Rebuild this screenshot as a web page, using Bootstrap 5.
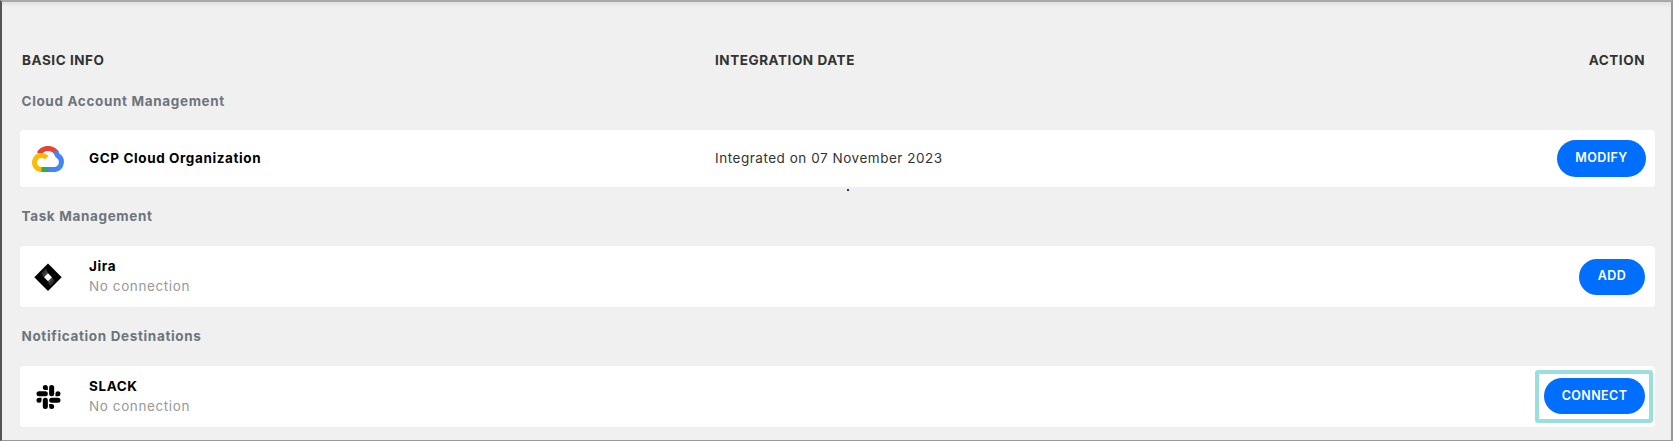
<!DOCTYPE html>
<html lang="en">
<head>
  <meta charset="UTF-8" />
  <title>Integrations</title>
  <link href="https://cdn.jsdelivr.net/npm/bootstrap@5.3.0/dist/css/bootstrap.min.css" rel="stylesheet" />
  <style>
    body {
      background-color: #fff;
      font-family: "Inter", "Liberation Sans", sans-serif;
      overflow: hidden;
    }

    .frame {
      width: 1673px;
      height: 441px;
      background-color: #f0f0f0;
      border-top: 2px solid #a9a9a9;
      border-left: 2px solid #555;
      border-right: 2px solid #999;
      border-bottom: 1px solid #999;
      box-shadow: inset 0 5px 5px -3px rgba(0, 0, 0, 0.08);
      padding: 48px 16px 0 18px;
      position: relative;
    }

    .head-row {
      height: 20px;
      margin-bottom: 21px;
      padding: 0 10px 0 2px;
      font-size: 13.5px;
      font-weight: 700;
      color: #333;
      letter-spacing: 0.55px;
      line-height: 20px;
    }

    .col-info { width: 693px; flex-shrink: 0; }

    .group-title {
      height: 20px;
      line-height: 20px;
      margin: 0 0 20px 1.5px;
      font-size: 13.5px;
      font-weight: 700;
      color: #6c757d;
      letter-spacing: 0.65px;
    }

    .item-row {
      height: 61px;
      margin-bottom: 19px;
      background-color: #fff;
      border-radius: 4px;
      padding-right: 10px;
    }

    .item-row.short { height: 57px; }

    .logo-cell {
      width: 69px;
      flex-shrink: 0;
      padding-left: 12px;
    }

    .logo-box { width: 33px; height: 26px; }
    .logo-box.tall { height: 28px; }

    .name-cell { width: 626px; flex-shrink: 0; }

    .item-name {
      font-size: 13.5px;
      font-weight: 700;
      color: #000;
      line-height: 18px;
      letter-spacing: 0.6px;
      margin-top: -1px;
      margin-bottom: 1px;
    }

    .item-sub {
      font-size: 13.5px;
      color: #999;
      line-height: 20px;
      letter-spacing: 0.6px;
    }

    .item-date {
      font-size: 13.5px;
      color: #333;
      letter-spacing: 0.53px;
    }

    .btn-pill {
      background-color: #006eff;
      border: 0;
      color: #fff;
      border-radius: 19px;
      height: 36px;
      padding: 0;
      font-size: 12.5px;
      font-weight: 600;
      letter-spacing: 0.4px;
    }

    .btn-pill:hover { background-color: #006eff; color: #fff; }

    .w-modify { width: 89px; height: 37px; margin-right: -1px; }
    .w-add { width: 66px; }
    .w-connect { width: 101px; }

    .hint-box {
      border: 4px solid #9adfdc;
      border-radius: 3px;
      padding: 4px 4px 5px 5px;
      margin-right: -8px;
    }

    .stray-dot {
      position: absolute;
      left: 845px;
      top: 187px;
      width: 2px;
      height: 2px;
      background-color: #2222dd;
    }
  </style>
</head>
<body>
  <div class="frame">
    <div class="stray-dot"></div>

    <div class="head-row d-flex">
      <div class="col-info">BASIC INFO</div>
      <div class="flex-grow-1">INTEGRATION DATE</div>
      <div>ACTION</div>
    </div>

    <div class="group-title" style="margin-bottom:19px">Cloud Account Management</div>
    <div class="item-row short d-flex align-items-center">
      <div class="logo-cell">
        <svg class="logo-box d-block" viewBox="32 145 33 26" fill="none" stroke-width="5">
          <path d="M39 152.500 A10.500 10.500 0 0 1 57 152.500" stroke="#ea4335" />
          <path d="M55.500 150 L57.500 154.500 A7.500 7.500 0 0 1 55 168.500 H48" stroke="#4285f4" />
          <path d="M48 168.500 H40" stroke="#34a853" />
          <path d="M41.500 168.500 A7 7 0 1 1 46.700 156.800" stroke="#fbbc05" />
        </svg>
      </div>
      <div class="name-cell item-name">GCP Cloud Organization</div>
      <div class="item-date flex-grow-1">Integrated on 07 November 2023</div>
      <button type="button" class="btn btn-pill w-modify">MODIFY</button>
    </div>

    <div class="group-title">Task Management</div>
    <div class="item-row d-flex align-items-center">
      <div class="logo-cell">
        <svg class="logo-box tall d-block" viewBox="32 262 33 28">
          <defs>
            <linearGradient id="jiraShadeA" x1="1" y1="1" x2="0" y2="0">
              <stop offset="0" stop-color="#666" />
              <stop offset="1" stop-color="#000" />
            </linearGradient>
            <linearGradient id="jiraShadeB" x1="0" y1="0" x2="1" y2="1">
              <stop offset="0" stop-color="#666" />
              <stop offset="1" stop-color="#000" />
            </linearGradient>
          </defs>
          <path d="M48 262.500 L61.700 276.200 L48 290 L34.300 276.200 Z" fill="#000" />
          <path d="M44 276.200 L48 272.200 L46 267 L41 272 Z" fill="url(#jiraShadeA)" />
          <path d="M52 276.200 L48 280.200 L50 285.500 L55 280.500 Z" fill="url(#jiraShadeB)" />
          <path d="M48 272.200 L52 276.200 L48 280.200 L44 276.200 Z" fill="#fff" />
        </svg>
      </div>
      <div class="name-cell">
        <div class="item-name">Jira</div>
        <div class="item-sub">No connection</div>
      </div>
      <div class="flex-grow-1"></div>
      <button type="button" class="btn btn-pill w-add">ADD</button>
    </div>

    <div class="group-title">Notification Destinations</div>
    <div class="item-row d-flex align-items-center">
      <div class="logo-cell">
        <svg class="logo-box d-block" viewBox="-4.500 -1 33 26" fill="#000">
          <path d="M5.042 15.165a2.528 2.528 0 0 1-2.52 2.523A2.528 2.528 0 0 1 0 15.165a2.527 2.527 0 0 1 2.522-2.52h2.52v2.52zM6.313 15.165a2.527 2.527 0 0 1 2.521-2.52 2.527 2.527 0 0 1 2.521 2.52v6.313A2.528 2.528 0 0 1 8.834 24a2.528 2.528 0 0 1-2.521-2.522v-6.313zM8.834 5.042a2.528 2.528 0 0 1-2.521-2.52A2.528 2.528 0 0 1 8.834 0a2.528 2.528 0 0 1 2.521 2.522v2.52H8.834zM8.834 6.313a2.528 2.528 0 0 1 2.521 2.521 2.528 2.528 0 0 1-2.521 2.521H2.522A2.528 2.528 0 0 1 0 8.834a2.528 2.528 0 0 1 2.522-2.521h6.312zM18.956 8.834a2.528 2.528 0 0 1 2.522-2.521A2.528 2.528 0 0 1 24 8.834a2.528 2.528 0 0 1-2.522 2.521h-2.522V8.834zM17.688 8.834a2.528 2.528 0 0 1-2.523 2.521 2.527 2.527 0 0 1-2.52-2.521V2.522A2.527 2.527 0 0 1 15.165 0a2.528 2.528 0 0 1 2.523 2.522v6.312zM15.165 18.956a2.528 2.528 0 0 1 2.523 2.522A2.528 2.528 0 0 1 15.165 24a2.527 2.527 0 0 1-2.52-2.522v-2.522h2.52zM15.165 17.688a2.527 2.527 0 0 1-2.52-2.523 2.526 2.526 0 0 1 2.52-2.52h6.313A2.527 2.527 0 0 1 24 15.165a2.528 2.528 0 0 1-2.522 2.523h-6.313z" />
        </svg>
      </div>
      <div class="name-cell">
        <div class="item-name">SLACK</div>
        <div class="item-sub">No connection</div>
      </div>
      <div class="flex-grow-1"></div>
      <div class="hint-box">
        <button type="button" class="btn btn-pill w-connect d-block">CONNECT</button>
      </div>
    </div>
  </div>

  <script src="https://cdn.jsdelivr.net/npm/bootstrap@5.3.0/dist/js/bootstrap.bundle.min.js"></script>
</body>
</html>
